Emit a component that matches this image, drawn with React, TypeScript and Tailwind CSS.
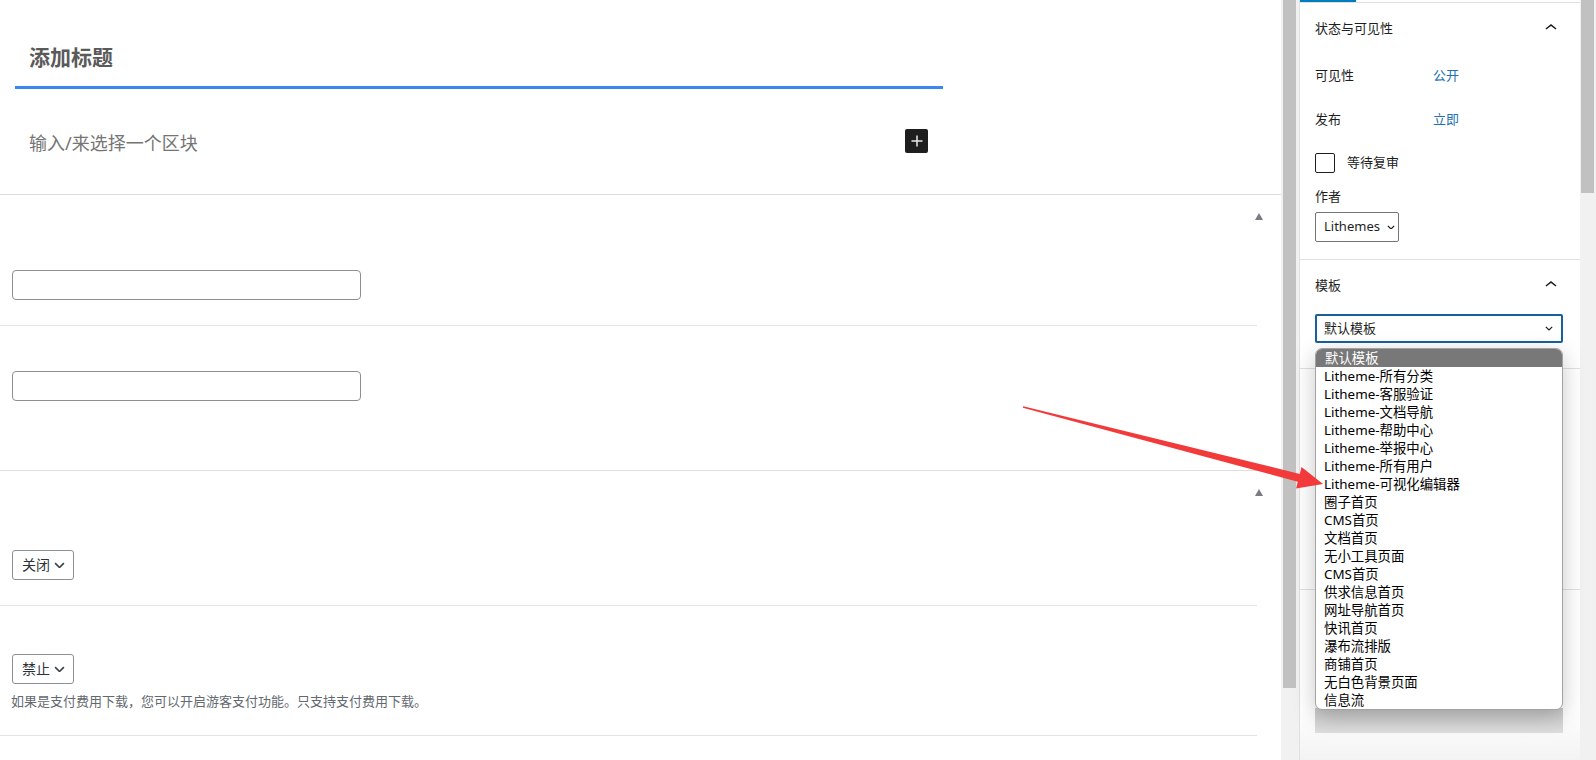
import React from 'react';

const FONT = '"Noto Sans", "Noto Sans CJK SC", sans-serif';

const templates = [
  'Litheme-所有分类',
  'Litheme-客服验证',
  'Litheme-文档导航',
  'Litheme-帮助中心',
  'Litheme-举报中心',
  'Litheme-所有用户',
  'Litheme-可视化编辑器',
  '圈子首页',
  'CMS首页',
  '文档首页',
  '无小工具页面',
  'CMS首页',
  '供求信息首页',
  '网址导航首页',
  '快讯首页',
  '瀑布流排版',
  '商铺首页',
  '无白色背景页面',
  '信息流',
];

function ChevronUp() {
  return (
    <svg width="24" height="24" viewBox="0 0 24 24" className="fill-[#1e1e1e]">
      <path d="M6.5 12.4L12 8l5.5 4.4-.9 1.2L12 10l-4.6 3.6-1-1.2z" />
    </svg>
  );
}

function SmallChevron({ w = 8, color = '#1e1e1e' }: { w?: number; color?: string }) {
  return (
    <svg width={w} height={w * 0.6} viewBox="0 0 10 6" fill="none">
      <path d="M1 1l4 4 4-4" stroke={color} strokeWidth="1.5" />
    </svg>
  );
}

function Toggle() {
  return <div className="w-0 h-0 border-l-[4.5px] border-r-[4.5px] border-b-[7px] border-l-transparent border-r-transparent border-b-[#787c82]" />;
}

function MetaSelect({ label }: { label: string }) {
  return (
    <div className="w-[62px] h-[30px] border border-[#8c8f94] rounded-[3px] flex items-center pl-[9px] gap-[4px] text-[14px] text-[#2c3338] leading-[18px]">
      <span>{label}</span>
      <SmallChevron w={11} color="#3c434a" />
    </div>
  );
}

export default function App() {
  return (
    <div className="relative w-[1596px] h-[760px] overflow-hidden bg-white flex" style={{ fontFamily: FONT }}>
      {/* editor area */}
      <div className="w-[1281px] flex flex-col">
        <div className="h-[195px] border-b border-[#dddddd] shrink-0">
          <div className="ml-[15px] w-[928px] pt-[42px]">
            <div className="pl-[14px] h-[47px] leading-[30px] border-b-[3px] border-[#3b87f2] text-[21px] font-bold text-[#5a5a5a]">
              添加标题
            </div>
            <div className="mt-[40px] h-[24px] pl-[14px] pr-[15px] flex items-center justify-between">
              <span className="text-[18px] text-[#757575] leading-[24px] mt-[4px]">输入/来选择一个区块</span>
              <div className="w-[23px] h-[24px] bg-[#1e1e1e] rounded-[2px] flex items-center justify-center">
                <svg width="12" height="12" viewBox="0 0 12 12">
                  <path d="M6 0.5v11M0.5 6h11" stroke="#e8e8e8" strokeWidth="1.5" />
                </svg>
              </div>
            </div>
          </div>
        </div>

        <div className="h-[276px] border-b border-[#dddddd] shrink-0">
          <div className="h-[42px] flex items-center justify-end pr-[18px]">
            <Toggle />
          </div>
          <div className="w-[1257px] h-[89px] border-b border-[#e2e4e7] pt-[33px] pl-[12px]">
            <div className="w-[349px] h-[30px] border border-[#8c8f94] rounded-[4px]" />
          </div>
          <div className="pt-[45px] pl-[12px]">
            <div className="w-[349px] h-[30px] border border-[#8c8f94] rounded-[4px]" />
          </div>
        </div>

        <div className="shrink-0">
          <div className="h-[42px] flex items-center justify-end pr-[18px]">
            <Toggle />
          </div>
          <div className="w-[1257px] h-[93px] border-b border-[#e2e4e7] pt-[37px] pl-[12px]">
            <MetaSelect label="关闭" />
          </div>
          <div className="w-[1257px] h-[130px] border-b border-[#e2e4e7] pt-[48px] pl-[12px]">
            <MetaSelect label="禁止" />
            <p className="mt-[8px] -ml-[1px] text-[13px] leading-[18px] text-[#646970]">
              如果是支付费用下载，您可以开启游客支付功能。只支持支付费用下载。
            </p>
          </div>
        </div>
      </div>

      {/* editor scrollbar */}
      <div className="w-[18px] bg-[#f1f1f1] shrink-0">
        <div className="ml-[2px] w-[13px] h-[688px] bg-[#c1c1c1]" />
      </div>

      {/* settings sidebar */}
      <div className="w-[281px] border-l border-[#e0e0e0] shrink-0 flex flex-col text-[13px] text-[#1e1e1e]">
        <div className="h-[3px] border-b border-[#e0e0e0]">
          <div className="w-[56px] h-[2px] bg-[#007cba]" />
        </div>

        <div className="pl-[15px] pr-[17px] pb-[17px] border-b border-[#e0e0e0]">
          <div className="h-[50px] flex items-center justify-between">
            <span className="leading-[20px]">状态与可见性</span>
            <ChevronUp />
          </div>
          <div className="mt-[5px] h-[36px] flex items-center">
            <span className="w-[118px]">可见性</span>
            <span className="text-[#2271b1]">公开</span>
          </div>
          <div className="mt-[8px] h-[36px] flex items-center">
            <span className="w-[118px]">发布</span>
            <span className="text-[#2271b1]">立即</span>
          </div>
          <div className="mt-[15px] h-[20px] flex items-center gap-[12px]">
            <div className="w-[20px] h-[20px] border border-[#1e1e1e] rounded-[2px]" />
            <span>等待复审</span>
          </div>
          <div className="mt-[13px] h-[20px] leading-[20px]">作者</div>
          <div className="mt-[6px] w-[84px] h-[30px] border border-[#757575] rounded-[2px] flex items-center pl-[8px] gap-[7px]">
            <span>Lithemes</span>
            <SmallChevron w={8} />
          </div>
        </div>

        <div className="pl-[15px] pr-[17px] pb-[25px] border-b border-[#e0e0e0]">
          <div className="h-[50px] flex items-center justify-between">
            <span className="leading-[20px]">模板</span>
            <ChevronUp />
          </div>
          <div className="mt-[4px] h-[29px] border-2 border-[#19609a] rounded-[2px] flex items-center justify-between pl-[7px] pr-[8px]">
            <span>默认模板</span>
            <SmallChevron w={8} />
          </div>
        </div>

        <div className="h-[221px] pl-[15px] pr-[17px] pt-[80px] border-b border-[#e0e0e0]">
          <div className="h-[30px] border border-[#757575] rounded-[2px]" />
        </div>

        <div className="pl-[15px] pr-[17px] pt-[118px] flex-1 bg-gradient-to-b from-white from-70% to-[#f3f3f3]">
          <div className="h-[25px] bg-gradient-to-b from-[#c8c8c8] to-[#dedede]" />
        </div>
      </div>

      {/* sidebar scrollbar */}
      <div className="w-[16px] bg-[#f1f1f1] shrink-0">
        <div className="ml-[1px] w-[13px] h-[193px] bg-[#c1c1c1]" />
      </div>

      {/* open template list */}
      <div className="absolute left-[1315px] top-[348px] w-[248px] bg-white border border-[#a3a3a3] rounded-[7px] overflow-hidden shadow-[0_6px_22px_rgba(0,0,0,0.22)] text-[13.4px] leading-[18px] text-black">
        <div className="h-[18px] pl-[9px] bg-[#787878] text-white">默认模板</div>
        {templates.map((t, i) => (
          <div key={i} className="h-[18px] pl-[8px] whitespace-nowrap">
            {t}
          </div>
        ))}
      </div>

      {/* annotation arrow */}
      <svg className="absolute left-0 top-0 pointer-events-none" width="1596" height="760">
        <polygon
          points="1023.2,406.3 1299.8,473.9 1301.5,467.1 1323,484 1296.1,488.5 1297.8,481.7 1022.8,407.7"
          fill="#f23a3a"
        />
      </svg>
    </div>
  );
}
